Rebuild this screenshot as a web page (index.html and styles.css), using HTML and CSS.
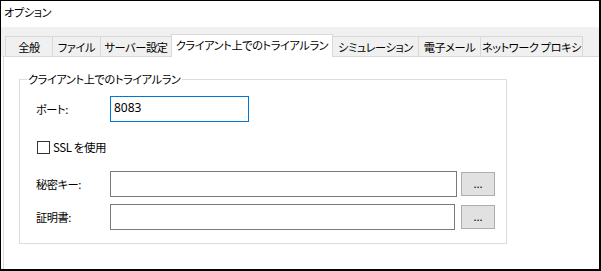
FILE: index.html
```html
<!DOCTYPE html>
<html lang="ja">
<head>
<meta charset="utf-8">
<title>オプション</title>
<link rel="stylesheet" href="styles.css">
</head>
<body>
<div class="window">
  <div class="titlebar">オプション</div>
  <div class="tabstrip">
    <div class="tab t-general">全般</div>
    <div class="tab t-file">ファイル</div>
    <div class="tab t-server">サーバー設定</div>
    <div class="tab active">クライアント上でのトライアルラン</div>
    <div class="tab t-sim">シミュレーション</div>
    <div class="tab t-mail">電子メール</div>
    <div class="tab t-proxy">ネットワーク プロキシ</div>
  </div>
  <div class="panel">
    <fieldset class="group">
      <legend class="group-title">クライアント上でのトライアルラン</legend>
      <div class="form">
        <div class="row row-port">
          <label class="label">ポート:</label>
          <div class="input input-port focused">8083</div>
        </div>
        <div class="row row-check">
          <span class="checkbox"></span>
          <span class="check-label">SSL を使用</span>
        </div>
        <div class="row row-key">
          <label class="label">秘密キー:</label>
          <div class="input input-key"></div>
          <div class="button">...</div>
        </div>
        <div class="row row-cert">
          <label class="label">証明書:</label>
          <div class="input input-cert"></div>
          <div class="button">...</div>
        </div>
      </div>
    </fieldset>
  </div>
</div>
</body>
</html>
```

FILE: styles.css
```css
* { box-sizing: border-box; }

html, body {
  margin: 0;
  padding: 0;
  background: #fff;
}

body {
  font-family: "Noto Sans CJK JP", "Noto Sans", sans-serif;
  font-size: 11.2px;
  color: #000;
  font-feature-settings: "palt";
  letter-spacing: -0.4px;
}

.window {
  width: 601px;
  height: 271px;
  border: 1px solid #000;
  border-right-width: 2px;
  border-bottom-width: 2px;
  background: #fff;
  overflow: hidden;
}

.titlebar {
  height: 26px;
  line-height: 22px;
  padding-left: 3px;
}

.tabstrip {
  display: flex;
  align-items: flex-end;
  height: 30px;
  padding-left: 4px;
  background: #f0f0f0;
}

.tab {
  height: 21px;
  line-height: 21px;
  padding: 0;
  border: 1px solid #d9d9d9;
  border-bottom: none;
  margin-left: -1px;
  text-align: center;
  color: #000;
  white-space: nowrap;
}

.tab:first-child { margin-left: 0; }

.t-general { width: 48px; }
.t-file { width: 49px; }
.t-server { width: 72px; }
.t-sim { width: 87px; }
.t-mail { width: 63px; }
.t-proxy { width: 103px; }

.tab.active {
  width: 162px;
  height: 23px;
  line-height: 20px;
  background: #fff;
  position: relative;
  z-index: 1;
}

.panel {
  height: 213px;
  margin-left: 2px;
  border-left: 1px solid #d9d9d9;
  border-top: 1px solid #d9d9d9;
  margin-top: -1px;
  background: #fff;
  padding: 14px 0 0 15px;
}

.group {
  width: 488px;
  margin: 0;
  padding: 0;
  border: 1px solid #dcdcdc;
}

.group-title {
  margin-left: 7px;
  padding: 0 1px;
  line-height: 16px;
}

.form {
  padding: 9px 11px 13px 16px;
  display: flex;
  flex-direction: column;
}

.row {
  display: flex;
  align-items: center;
}

.label {
  width: 74px;
  flex: none;
}

.input {
  height: 26px;
  border: 1px solid #7a7a7a;
  background: #fff;
  line-height: 22px;
  padding-left: 3px;
  font-family: "Noto Sans", "Noto Sans CJK JP", sans-serif;
  font-size: 12px;
  letter-spacing: 0;
}

.input.focused { border-color: #0078d7; }

.input-port { width: 139px; }
.input-key { width: 347px; }
.input-cert { width: 345px; }

.row-check {
  margin-top: 17px;
  height: 16px;
  padding-left: 1px;
}

.checkbox {
  width: 13px;
  height: 13px;
  border: 1px solid #333;
  background: #fff;
  margin-right: 3px;
  flex: none;
}

.check-label {
  font-size: 11.5px;
}

.row-key { margin-top: 16px; }
.row-cert { margin-top: 7px; }

.button {
  margin-left: auto;
  width: 34px;
  height: 24px;
  border: 1px solid #adadad;
  background: #e1e1e1;
  text-align: center;
  line-height: 20px;
  font-size: 11px;
  letter-spacing: 0;
}
```
